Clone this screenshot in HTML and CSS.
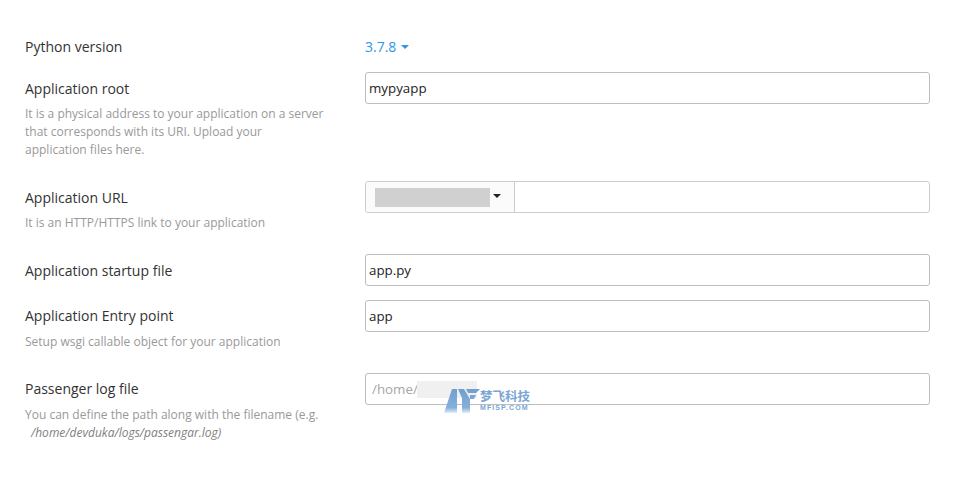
FILE: index.html
```html
<!DOCTYPE html>
<html lang="en">
<head>
<meta charset="utf-8">
<title>Python application settings</title>
<link rel="stylesheet" href="styles.css">
</head>
<body>
<form class="form">
  <div class="row row-short">
    <div class="label">Python version</div>
    <div class="version"><span>3.7.8</span><i class="caret caret-blue"></i></div>
  </div>
  <div class="row">
    <div>
      <div class="label">Application root</div>
      <p class="hint">It is a physical address to your application on a server that corresponds with its URI. Upload your application files here.</p>
    </div>
    <div class="input">mypyapp</div>
  </div>
  <div class="row">
    <div>
      <div class="label">Application URL</div>
      <p class="hint">It is an HTTP/HTTPS link to your application</p>
    </div>
    <div class="input input-url">
      <div class="domain"><span class="redact"></span><i class="caret caret-dark"></i></div>
    </div>
  </div>
  <div class="row">
    <div class="label">Application startup file</div>
    <div class="input">app.py</div>
  </div>
  <div class="row">
    <div>
      <div class="label label-up">Application Entry point</div>
      <p class="hint">Setup wsgi callable object for your application</p>
    </div>
    <div class="input">app</div>
  </div>
  <div class="row">
    <div>
      <div class="label label-up">Passenger log file</div>
      <p class="hint">You can define the path along with the filename (e.g.<br><em class="path">/home/devduka/logs/passengar.log)</em></p>
    </div>
    <div class="input input-log">
      <span class="placeholder">/home/</span><span class="redact-light"></span>
      <div class="mark">
        <svg class="mark-logo" width="36" height="24" viewBox="0 0 36 24">
          <defs>
            <linearGradient id="fade" gradientUnits="userSpaceOnUse" x1="0" y1="0" x2="0" y2="24">
              <stop offset="0" stop-color="#6f9fd0"/>
              <stop offset="0.78" stop-color="#86b0da"/>
              <stop offset="1" stop-color="#e4eef7"/>
            </linearGradient>
          </defs>
          <path fill="url(#fade)" d="M0 24 8 0h5v24ZM14 0h6l6 10v14h-8V9ZM22 0h14l-4 4h-8ZM26 6h6l-2 4h-4Z"/>
        </svg>
        <div class="mark-text">
          <div class="mark-cn">梦飞科技</div>
          <div class="mark-en">MFISP.COM</div>
        </div>
      </div>
    </div>
  </div>
</form>
</body>
</html>
```
FILE: styles.css
```css
* { box-sizing: border-box; }
html, body { margin: 0; padding: 0; background: #fff; }
body {
  width: 974px;
  height: 488px;
  overflow: hidden;
  font-family: "Open Sans", "Noto Sans", sans-serif;
  font-size: 14px;
  color: #333;
}
.form { padding: 30px 44px 0 25px; }
.row {
  display: grid;
  grid-template-columns: 340px 1fr;
  margin-bottom: 14px;
}
.row-short { margin-bottom: 10px; }
.label { height: 32px; padding-top: 1px; line-height: 32px; color: #333; }
.label-up { padding-top: 0; }
.hint {
  margin: 1px 0 8px;
  width: 299px;
  font-size: 12px;
  line-height: 18px;
  color: #999;
}
.path { display: inline-block; padding-left: 6px; color: #808080; }
.version {
  display: flex;
  align-items: center;
  gap: 5px;
  height: 32px;
  color: #2f96e8;
  font-size: 14px;
}
.caret {
  display: inline-block;
  width: 0;
  height: 0;
  border-left: 4px solid transparent;
  border-right: 4px solid transparent;
  border-top: 4px solid currentColor;
}
.caret-blue { color: #2f96e8; margin-top: 1px; }
.caret-dark { color: #222; margin-left: 3px; margin-top: -3px; }
.input {
  position: relative;
  display: flex;
  align-items: center;
  height: 32px;
  padding: 0 3px;
  border: 1px solid #bdbdbd;
  border-radius: 3px;
  background: #fff;
  font-size: 13.33px;
  color: #222;
}
.input-url { padding: 0; border-color: #ccc; }
.domain {
  display: flex;
  align-items: center;
  width: 149px;
  height: 100%;
  padding-left: 9px;
  border-right: 1px solid #ccc;
  background: #fbfbfb;
  border-radius: 3px 0 0 3px;
}
.redact { width: 115px; height: 19px; background: #d0d0d0; }
.input-log { padding-left: 6px; }
.placeholder { width: 44px; color: #a5a5a5; white-space: nowrap; }
.redact-light { width: 60px; height: 17px; background: #f0f0f0; margin-left: 1px; }
.mark {
  position: absolute;
  left: 78px;
  top: 15px;
  display: flex;
}
.mark-logo { display: block; }
.mark-text { color: #7ba6d3; }
.mark-cn { font-family: "Noto Sans CJK SC", sans-serif; font-size: 12.5px; font-weight: 700; line-height: 14px; }
.mark-en { font-family: "Liberation Sans", sans-serif; font-size: 7px; font-weight: 700; line-height: 9px; letter-spacing: 1.1px; }
```
